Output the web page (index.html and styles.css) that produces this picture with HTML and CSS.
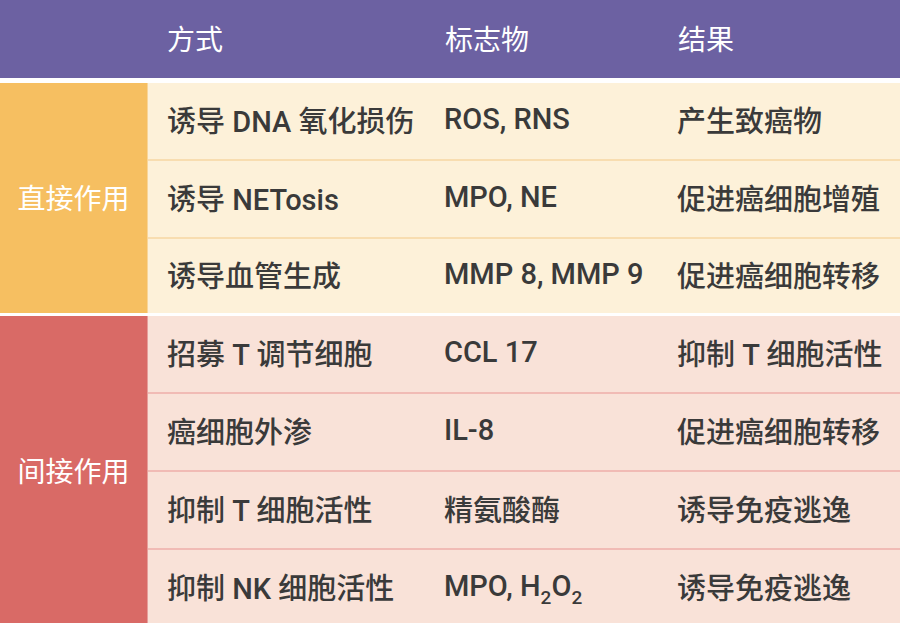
FILE: index.html
```html
<!DOCTYPE html>
<html lang="zh">
<head>
<meta charset="utf-8">
<link rel="stylesheet" href="styles.css">
</head>
<body>
<div class="table">
  <div class="head">
    <div class="hcell c1"></div>
    <div class="hcell c2"><span>方式</span></div>
    <div class="hcell c3"><span>标志物</span></div>
    <div class="hcell c4"><span>结果</span></div>
  </div>
  <div class="group direct">
    <div class="label"><span>直接作用</span></div>
    <div class="rows">
      <div class="row"><div class="cell c2"><span>诱导 DNA 氧化损伤</span></div><div class="cell c3"><span>ROS, RNS</span></div><div class="cell c4"><span>产生致癌物</span></div></div>
      <div class="row"><div class="cell c2"><span>诱导 NETosis</span></div><div class="cell c3"><span>MPO, NE</span></div><div class="cell c4"><span>促进癌细胞增殖</span></div></div>
      <div class="row"><div class="cell c2"><span>诱导血管生成</span></div><div class="cell c3"><span>MMP 8, MMP 9</span></div><div class="cell c4"><span>促进癌细胞转移</span></div></div>
    </div>
  </div>
  <div class="group indirect">
    <div class="label"><span>间接作用</span></div>
    <div class="rows">
      <div class="row"><div class="cell c2"><span>招募 T 调节细胞</span></div><div class="cell c3"><span>CCL 17</span></div><div class="cell c4"><span>抑制 T 细胞活性</span></div></div>
      <div class="row"><div class="cell c2"><span>癌细胞外渗</span></div><div class="cell c3"><span>IL-8</span></div><div class="cell c4"><span>促进癌细胞转移</span></div></div>
      <div class="row"><div class="cell c2"><span>抑制 T 细胞活性</span></div><div class="cell c3"><span>精氨酸酶</span></div><div class="cell c4"><span>诱导免疫逃逸</span></div></div>
      <div class="row"><div class="cell c2"><span>抑制 NK 细胞活性</span></div><div class="cell c3"><span>MPO, H<sub>2</sub>O<sub>2</sub></span></div><div class="cell c4"><span>诱导免疫逃逸</span></div></div>
    </div>
  </div>
</div>
</body>
</html>
```
FILE: styles.css
```css
html, body {
  margin: 0;
  padding: 0;
  background: #ffffff;
}
body {
  width: 900px;
  height: 623px;
  overflow: hidden;
  font-family: Roboto, "Noto Sans CJK SC", sans-serif;
  font-size: 28px;
  color: #3a3a3a;
}
.table {
  display: flex;
  flex-direction: column;
}
.head {
  display: flex;
  height: 78px;
  background: #6c61a2;
  color: #ffffff;
  margin-bottom: 5px;
}
.hcell {
  display: flex;
  align-items: center;
  padding-left: 20px;
  box-sizing: border-box;
  padding-bottom: 2px;
}
.c1 { width: 147px; padding-left: 0; }
.c2 { width: 278px; }
.c3 { width: 233px; }
.c4 { flex: 1; }
.group {
  display: flex;
}
.label {
  width: 148px;
  box-sizing: border-box;
  border-right: 1px solid rgba(255, 255, 255, 0.35);
  display: flex;
  align-items: center;
  justify-content: center;
  color: #ffffff;
  padding-bottom: 2px;
}
.rows {
  flex: 1;
  display: flex;
  flex-direction: column;
}
.row {
  display: flex;
  height: 76px;
  border-bottom: 2px solid transparent;
}
.cell {
  display: flex;
  align-items: center;
  padding-left: 19px;
  padding-bottom: 5px;
  box-sizing: border-box;
  font-weight: 500;
  font-size: 29px;
  white-space: nowrap;
}
.row .c2 { width: 277px; }
.direct .label { background: #f6bf61; }
.direct .rows { background: #fdf1d9; }
.direct .row { border-bottom-color: #f8ddb0; }
.direct .row:last-child { border-bottom: 0; height: 74px; }
.direct { margin-bottom: 3px; }
.indirect .label { background: #d96a66; }
.indirect .rows { background: #f9e2d8; }
.indirect .row { border-bottom-color: #f1bbb5; }
.indirect .row:last-child { border-bottom: 0; }
sub {
  font-size: 19px;
  vertical-align: -8px;
  line-height: 0;
}
```
